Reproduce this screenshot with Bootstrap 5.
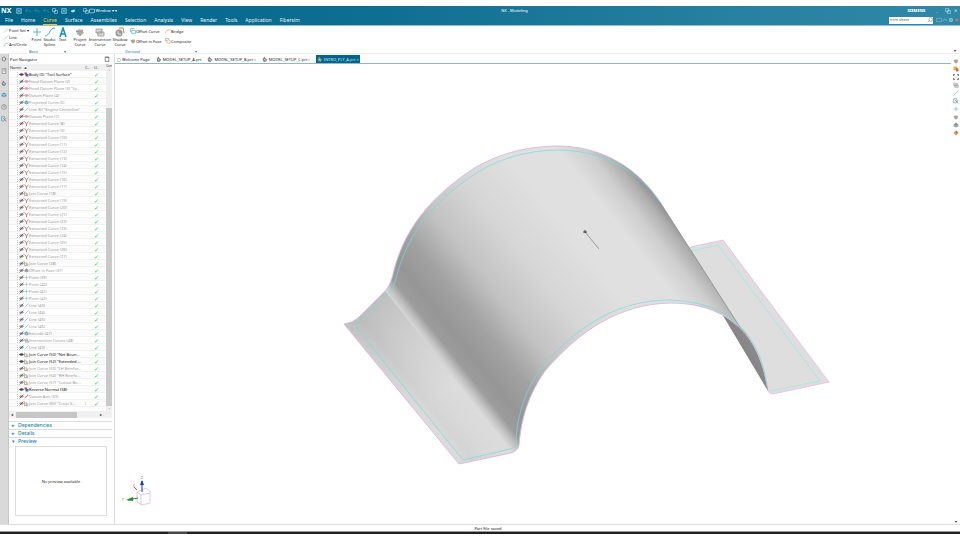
<!DOCTYPE html>
<html lang="en">
<head>
<meta charset="utf-8">
<meta name="viewport" content="width=device-width, initial-scale=1">
<title>NX - Modeling</title>
<link href="https://cdn.jsdelivr.net/npm/bootstrap@5.3.0/dist/css/bootstrap.min.css" rel="stylesheet">
<style>
body{font-family:"Noto Sans","Open Sans",sans-serif;font-size:4px;line-height:5px;color:#222;background:#fff;padding:6px 0}
button,a.plain{font:inherit;color:inherit;background:none;border:0;padding:0;text-decoration:none;white-space:nowrap}
svg{display:block;flex:none}
.i6{width:6px;height:6px}
.i10{width:10px;height:10px}
.topbar{background:linear-gradient(90deg,#006489,#0f6f93 40%,#26809f 75%,#2f88a6);color:#fff;border-bottom:1px solid #8fc0d4}
.quick{height:9px;padding:0 3px 0 1px;gap:3px}
.brand-nx{font-size:7px;font-weight:700;line-height:9px;margin-right:2px}
.doc-title{left:0;right:0;padding-left:69px;text-align:center;pointer-events:none}
.menus{height:10px;padding-left:5px;gap:8px;font-size:5px;line-height:10px;color:#e8f4f8}
.menus .active{color:#ffd23c;border-bottom:1px solid #f2c230}
.siemens{font-weight:800;font-size:4px}
.find{width:44px;height:7px;background:#fff;margin-right:3px}
.find input{border:0;padding:0 1px;font-size:4px;line-height:6px;min-width:0;flex:1;color:#555;outline:0}
.ribbon{height:28px;border-bottom:1px solid #eee;padding-left:3px}
.group-a{width:63px}
.group-b{width:127px}
.group-a{margin-right:4px}
.tools-row{height:23px}
.group-name{color:#1680a3;height:5px}
.small-col{width:27px;flex:none;gap:2px;padding-top:2px}
.small-col svg,.small-col button{height:5px}
.tall{display:flex;flex:none;flex-direction:column;align-items:center;text-align:center;white-space:normal!important;padding-top:1px!important}
.w13{width:13px}.w20{width:20px}
.duo{display:grid;grid-template-columns:35px 30px;align-content:start;row-gap:4px;padding-top:2px}
.rail{width:9px;background:#d9d9d9;border-right:1px solid #c6c6c6;gap:6px;padding-top:2px}
.nav-pane{width:106px;border-right:1px solid #ddd;padding-right:2px}
.pane-title{height:10px;padding:0 2px 0 1px}
.tree-area{height:347px}
.tree{table-layout:fixed;border-collapse:collapse;width:97px;font-size:4px}
.tree tr{height:7px}
.tree td,.tree th{padding:0;height:7px;line-height:5px;overflow:hidden;white-space:nowrap;vertical-align:middle;box-shadow:inset 0 -1px #f2f2f2}
.tree th{font-weight:400;background:#efefef;color:#444}
.tree tbody td{color:#999}
.tree tbody tr.live td{color:#111}
.tree tbody tr:nth-child(even){background:#fbfbfb}
.node{display:flex;align-items:center;padding-left:8px}
.node::before{content:"";width:2px;height:5px;border-left:1px dotted #ccc}
.tick{display:block;color:#28d040;font:700 6px/5px "DejaVu Sans",sans-serif}
.vbar{width:6px;background:#f0f0f0;font-size:3px}
.vthumb{background:#c9c9c9;margin-top:34px}
.hbar{height:7px;background:#f0f0f0;padding:0 2px;margin-bottom:3px}
.hthumb{width:61px;height:6px;background:#c6c6c6;margin-left:3px}
.fold{display:flex;align-items:center;gap:3px;width:100%;height:8px;font-size:5px!important;font-weight:500!important;color:#237f9f!important;padding-left:3px!important;border-top:1px solid #ddd!important}
.preview-box{margin:1px 5px 8px 6px;height:70px;border:1px solid #ddd}
.tabs{height:10px;border-bottom:1px solid #8cbacd;padding:1px 0 0 2px}
.tabs button{display:flex;align-items:center;gap:1px;height:8px;padding:0 6px 0 0}
.tabs .current{background:#00648b;color:#cfe6ef;padding:0 1px}
.side{width:9px;gap:2px;padding-top:4px}
.status{height:7px;border-top:1px solid #ddd;color:#111}
.taskbar{height:3px;background:#221f20;border-top:1px solid #999}
.taskbar span{width:19px;background:#4a4748;margin-left:168px}
.canvas-wrap{min-width:0}
</style>
<script src="https://cdn.jsdelivr.net/npm/bootstrap@5.3.0/dist/js/bootstrap.bundle.min.js"></script>
</head>
<body class="d-flex flex-column min-vh-100">
<svg width="0" height="0" class="position-absolute" aria-hidden="true">
<defs>
<symbol id="line" viewBox="0 0 10 10"><path d="M1 9 9 1" stroke="#48aacb" fill="none"/></symbol>
<symbol id="point" viewBox="0 0 10 10"><path d="M5 1v8M1 5h8" stroke="#55b4dc" fill="none"/></symbol>
<symbol id="arc" viewBox="0 0 10 10"><path d="M1 9Q2 2 9 2" stroke="#48aacb" fill="none"/></symbol>
<symbol id="spline" viewBox="0 0 10 10"><path d="M0 9C5 9 4 1 10 1" stroke="#48aacb" fill="none"/></symbol>
<symbol id="txt" viewBox="0 0 10 10"><path d="M2 10 5 1l3 9M3 7h4" stroke="#0f91bb" stroke-width="1.500" fill="none"/></symbol>
<symbol id="solid" viewBox="0 0 10 10"><path d="M1 4 4 2l4 1v4L5 9 2 7z" fill="#b4b8ba"/><path d="M1 4 5 5l3-2M5 5v4" stroke="#777" stroke-width=".6" fill="none"/><path d="M3 7Q6 3 9 6" stroke="#df975f" fill="none"/></symbol>
<symbol id="layers" viewBox="0 0 10 10"><path d="M1 2h6v4H1zM3 5h6v4H3z" fill="#d4dadd" stroke="#879096" stroke-width=".7"/><path d="M2 8 8 2" stroke="#e2a06f" fill="none"/></symbol>
<symbol id="shadow" viewBox="0 0 10 10"><circle cx="4" cy="6" r="3.500" fill="#969696"/><path d="M4 1h4l1 5" stroke="#d77b44" fill="none"/><path d="M3 4v3h3" stroke="#eee" fill="none"/></symbol>
<symbol id="offset" viewBox="0 0 10 10"><path d="M1 7V1h6M3 9V4h6v5z" stroke="#38a0b9" fill="none"/></symbol>
<symbol id="bridge" viewBox="0 0 10 10"><path d="M0 9Q3 3 6 3h4" stroke="#e29358" fill="none"/></symbol>
<symbol id="comp" viewBox="0 0 10 10"><path d="M1 1h5v4H1z" stroke="#46a9c9" fill="none"/><circle cx="6" cy="6" r="3" stroke="#e5a76d" fill="#fff4dc"/></symbol>
<symbol id="eye" viewBox="0 0 10 10"><path d="M0 5Q5 0 10 5 5 10 0 5" fill="#444"/></symbol>
<symbol id="hidden" viewBox="0 0 10 10"><path d="M0 5Q5 0 10 5 5 10 0 5" fill="#999"/><path d="M1 9 9 1" stroke="#555" stroke-width="1.500"/></symbol>
<symbol id="body" viewBox="0 0 10 10"><path d="M1 1h5v4H1z" fill="#d44545"/><path d="M3 4h6v5H3z" fill="#3771bc"/></symbol>
<symbol id="plane" viewBox="0 0 10 10"><path d="M0 5h10M5 2v6M2 3l6 4M8 3 2 7" stroke="#ee8ca3" stroke-width="1.500"/></symbol>
<symbol id="ext" viewBox="0 0 10 10"><path d="M1 1 5 6v4" stroke="#e96d5c" stroke-width="2" fill="none"/><path d="M9 1 5 6" stroke="#999" stroke-width="2"/></symbol>
<symbol id="join" viewBox="0 0 10 10"><path d="M1 1v8h6M4 2v4h5" stroke="#a69487" stroke-width="1.500" fill="none"/><path d="m5 7 3 2" stroke="#de955a" stroke-width="2"/></symbol>
<symbol id="axis" viewBox="0 0 10 10"><path d="m1 8 6-5" stroke="#d65b72" stroke-width="2"/><path d="m6 1 3 1-2 3" fill="#d65b72"/></symbol>
<symbol id="cube" viewBox="0 0 10 10"><path d="M1 3 5 1l4 2v4L5 9 1 7z" fill="#579eb5"/><path d="M1 3 5 5l4-2M5 5v4" stroke="#d8eef4" fill="none"/></symbol>
<symbol id="save" viewBox="0 0 10 10"><path d="M1 1h8v8H1zM3 1v3h4V1M3 9V6h4v3" stroke="#a6d6e8" fill="none"/></symbol>
<symbol id="undo" viewBox="0 0 10 10"><path d="M4 1 1 4l3 3M1 4h5q3 0 3 4" stroke="#3d91ad" fill="none"/></symbol>
<symbol id="win" viewBox="0 0 10 10"><path d="M1 2h8v6H1z" stroke="#e5f4f9" fill="none"/></symbol>
<symbol id="copy" viewBox="0 0 10 10"><path d="M1 1h5v5H1zM4 4h5v5H4z" stroke="#b9deeb" fill="none"/></symbol>
<symbol id="wpart" viewBox="0 0 10 10"><path d="M1 5 5 3h4L7 7H3z" fill="#b9deeb"/></symbol>
<symbol id="part" viewBox="0 0 10 10"><path d="M1 5 4 1l2 3 3 2-3 4-4-1z" fill="#888"/><path d="m3 5 3 2" stroke="#fff"/></symbol>
<symbol id="fit" viewBox="0 0 10 10"><path d="M1 3V1h2M7 1h2v2M9 7v2H7M3 9H1V7" stroke="#333" stroke-width="1.500" fill="none"/><path d="M4 4h2v2H4z" fill="#999"/></symbol>
<symbol id="gear" viewBox="0 0 10 10"><circle cx="5" cy="5" r="3" stroke="#777" stroke-width="2" stroke-dasharray="2 1" fill="none"/></symbol>
<symbol id="clock" viewBox="0 0 10 10"><circle cx="5" cy="5" r="4" stroke="#777" fill="none"/><path d="M5 2v3h2" stroke="#777" fill="none"/></symbol>
<symbol id="lens" viewBox="0 0 10 10"><circle cx="6" cy="4" r="3" stroke="#777" fill="none"/><path d="M4 6 1 9" stroke="#777"/></symbol>
<symbol id="page" viewBox="0 0 10 10"><path d="M2 1h6v8H2z" fill="#eee" stroke="#777"/><path d="M4 3h3M4 5h3" stroke="#777"/></symbol>
<symbol id="tools" viewBox="0 0 10 10"><path d="M1 1h5v3M1 1v7h3" stroke="#3c98b6" fill="none"/><path d="m3 3 6 6M9 3 4 9" stroke="#777" stroke-width="1.200"/></symbol>
<symbol id="hot" viewBox="0 0 10 10"><path d="M1 1h6v6H1z" fill="#f0a045"/><path d="M5 4h4v5H5z" fill="#b46b40"/></symbol>
<symbol id="gem" viewBox="0 0 10 10"><path d="M1 5 5 1l4 4-4 4z" fill="#e89156"/><path d="m5 1 4 4H5z" fill="#936d5c"/></symbol>
<symbol id="gray" viewBox="0 0 10 10"><path d="m1 4 4-3 4 3v3L5 9 1 7z" fill="#8c9290"/><path d="m2 5 3 2 4-3" stroke="#cfd5ce" fill="none"/></symbol>
</defs>
</svg>

<header class="topbar">
  <div class="quick d-flex align-items-center position-relative">
    <span class="brand-nx">NX</span>
    <svg class="i6"><use href="#save"/></svg>
    <svg class="i6"><use href="#undo"/></svg>
    <svg class="i6"><use href="#undo"/></svg>
    <svg class="i6"><use href="#undo"/></svg>
    <svg class="i6"><use href="#copy"/></svg>
    <svg class="i6"><use href="#save"/></svg>
    <svg class="i6"><use href="#wpart"/></svg>
    <button class="d-flex align-items-center ms-1"><svg class="i6"><use href="#copy"/></svg><svg class="i6"><use href="#win"/></svg>Window ▾ ▾</button>
    <span class="doc-title position-absolute">NX - Modeling</span>
    <span class="ms-auto siemens me-1">SIEMENS</span>
    <button aria-label="Minimize" class="px-1">_</button>
    <button aria-label="Restore"><svg class="i6"><use href="#copy"/></svg></button>
    <button aria-label="Close">✕</button>
  </div>
  <div class="d-flex align-items-center">
    <nav class="menus d-flex">
      <a class="plain" href="#">File</a><a class="plain" href="#">Home</a><a class="plain active" href="#">Curve</a><a class="plain" href="#">Surface</a><a class="plain" href="#">Assemblies</a><a class="plain" href="#">Selection</a><a class="plain" href="#">Analysis</a><a class="plain" href="#">View</a><a class="plain" href="#">Render</a><a class="plain" href="#">Tools</a><a class="plain" href="#">Application</a><a class="plain" href="#">Fibersim</a>
    </nav>
    <div class="find d-flex align-items-center ms-auto"><input type="text" value="trim sheet" aria-label="Find a command"><svg class="i6"><use href="#lens"/></svg></div>
    <button aria-label="Full screen"><svg class="i6"><use href="#win" opacity=".5"/></svg></button>
    <button aria-label="Collapse ribbon"><svg class="i6" viewBox="0 0 10 10"><path d="m1 7 4-4 4 4" stroke="#a9d3e0" fill="none"/></svg></button>
    <button aria-label="Help"><svg class="i6" viewBox="0 0 10 10"><circle cx="5" cy="5" r="3" fill="#69abc2" stroke="#a9d3e0"/></svg></button>
    <button aria-label="Record"><svg class="i6" viewBox="0 0 10 10"><circle cx="5" cy="5" r="3" fill="#ac7772"/></svg></button>
  </div>
</header>

<section class="ribbon d-flex">
  <div class="group-a">
    <div class="tools-row d-flex">
      <div class="small-col d-flex flex-column align-items-start">
        <button class="d-flex"><svg class="i6"><use href="#line"/></svg>Point Set ▾</button>
        <button class="d-flex"><svg class="i6"><use href="#line"/></svg>Line</button>
        <button class="d-flex"><svg class="i6"><use href="#arc"/></svg>Arc/Circle</button>
      </div>
      <button class="tall w13"><svg class="i10"><use href="#point"/></svg>Point</button>
      <button class="tall w13"><svg class="i10"><use href="#spline"/></svg>Studio Spline</button>
      <button class="tall w13"><svg class="i10"><use href="#txt"/></svg>Text</button>
    </div>
    <div class="group-name d-flex"><span class="mx-auto">Base</span><span>▾</span></div>
  </div>
  <div class="group-b">
    <div class="tools-row d-flex">
      <button class="tall w20"><svg class="i10"><use href="#solid"/></svg>Project<br>Curve</button>
      <button class="tall w20"><svg class="i10"><use href="#layers"/></svg>Intersection<br>Curve</button>
      <button class="tall w20"><svg class="i10"><use href="#shadow"/></svg>Shadow<br>Curve</button>
      <div class="duo">
        <button class="d-flex align-items-center"><svg class="i6"><use href="#offset"/></svg>Offset Curve</button>
        <button class="d-flex align-items-center"><svg class="i6"><use href="#bridge"/></svg>Bridge</button>
        <button class="d-flex align-items-center"><svg class="i6"><use href="#solid"/></svg>Offset in Face</button>
        <button class="d-flex align-items-center"><svg class="i6"><use href="#comp"/></svg>Composite</button>
      </div>
    </div>
    <div class="group-name d-flex"><span class="mx-auto">Derived</span><span>▾</span></div>
  </div>
  <button class="ms-auto align-self-end pe-1" aria-label="Ribbon options">▾</button>
</section>

<main class="d-flex flex-grow-1">
  <aside class="rail d-flex flex-column align-items-center">
    <svg class="i6"><use href="#gear"/></svg>
    <svg class="i6"><use href="#page"/></svg>
    <svg class="i6"><use href="#part"/></svg>
    <svg class="i6"><use href="#cube"/></svg>
    <svg class="i6"><use href="#clock"/></svg>
    <svg class="i6"><use href="#tools"/></svg>
  </aside>
  <section class="nav-pane d-flex flex-column flex-shrink-0">
    <div class="pane-title d-flex align-items-center justify-content-between"><span>Part Navigator</span><svg class="i6" viewBox="0 0 10 10"><path d="M2 2h6v7H2zM2 2h6" stroke="#444" fill="none"/></svg></div>
    <div class="tree-area d-flex">
      <table class="tree align-self-start">
        <colgroup><col style="width:76px"><col style="width:9px"><col style="width:12px"></colgroup>
        <thead><tr><th>&nbsp;Name &nbsp;▲</th><th>C..</th><th>U..</th></tr></thead>
        <tbody id="rows"></tbody>
      </table>
      <div class="vbar d-flex flex-column align-items-center"><span>Con</span><span>⌃</span><div class="vthumb w-100 flex-grow-1"></div><span>⌄</span></div>
    </div>
    <div class="hbar d-flex align-items-center"><span>◂</span><div class="hthumb"></div><span class="ms-auto me-2">▸</span></div>
    <button class="fold"><span>▸</span>Dependencies</button>
    <button class="fold"><span>▸</span>Details</button>
    <button class="fold"><span>▾</span>Preview</button>
    <div class="preview-box d-flex align-items-center justify-content-center">No preview available</div>
  </section>
  <section class="canvas-wrap flex-grow-1 d-flex">
      <div class="flex-grow-1 d-flex flex-column canvas-wrap">
        <div class="tabs d-flex">
          <button>▢ Welcome Page</button>
          <button><svg class="i6"><use href="#part"/></svg>MODEL_SETUP_A.prt</button>
          <button><svg class="i6"><use href="#part"/></svg>MODEL_SETUP_B.prt ▫</button>
          <button><svg class="i6"><use href="#part"/></svg>MODEL_SETUP_C.prt ▫</button>
          <button class="current"><svg class="i6"><use href="#part"/></svg>INTRO_PLY_A.prt ×</button>
        </div>
        <svg class="w-100" viewBox="115 64 836 460" role="img" aria-label="Tool surface model">
          <defs>
            <linearGradient id="shade" gradientUnits="userSpaceOnUse" x1="344" y1="324" x2="595" y2="124">
              <stop offset="0" stop-color="#dedede"/><stop offset=".05" stop-color="#d4d4d4"/><stop offset=".11" stop-color="#dadada"/><stop offset=".16" stop-color="#dcdcdc"/><stop offset=".18" stop-color="#c4c4c4"/><stop offset=".205" stop-color="#9c9c9c"/><stop offset=".25" stop-color="#969696"/><stop offset=".33" stop-color="#a2a2a2"/><stop offset=".43" stop-color="#c2c2c2"/><stop offset=".57" stop-color="#d6d6d6"/><stop offset=".73" stop-color="#e0e0e0"/><stop offset=".86" stop-color="#e0e0e0"/><stop offset=".93" stop-color="#cecece"/><stop offset=".98" stop-color="#aeaeae"/><stop offset="1" stop-color="#989898"/>
            </linearGradient>
            <linearGradient id="fade" gradientUnits="userSpaceOnUse" x1="375" y1="295" x2="470" y2="411"><stop offset="0" stop-color="#888" stop-opacity=".35"/><stop offset=".8" stop-color="#aaa" stop-opacity="0"/></linearGradient>
            <linearGradient id="under" x1="0" y1="1" x2="1" y2="0"><stop offset="0" stop-color="#737373"/><stop offset="1" stop-color="#989898"/></linearGradient>
          </defs>
          <path d="M691 247 723 240 829 382 773 394Q768 394 767 386C764 368 757 347 743 331L730 325 680 249z" fill="#dedede"/>
          <path d="M691 247 723 240 829 382 773 394Q768 394 767 386" fill="none" stroke="#e4c0e4" stroke-width=".9"/>
          <path d="M692 251 718 245 820 381 770 391" fill="none" stroke="#96e8e5" stroke-width=".7"/>
          <path d="M722 314 743 330C757 347 764 368 768 391z" fill="url(#under)"/>
          <path d="M344 324Q352 323 358 318L385 291Q391 285 394 270C407 221 439 191 476 167C503 152 530 146 560 146C603 147 638 168 660 202L743 331C728 315 705 303 670 303C620 304 580 330 545 371C528 395 521 420 519 445Q518 451 511 453L459 464z" fill="url(#shade)"/>
          <path d="M344 324Q352 323 358 318L385 291 494 428 459 464z" fill="url(#fade)"/>
          <path d="M660 202 741 329" fill="none" stroke="#8f8f8f" stroke-width=".7"/>
          <path d="M459 464 344 324Q352 323 358 318L385 291Q391 285 394 270C407 221 439 191 476 167C503 152 530 146 560 146C603 147 638 168 660 202M767 386C762 350 740 303 670 303C620 304 580 330 545 371C528 395 521 420 519 445Q518 451 511 453L459 464" fill="none" stroke="#dcb6de" stroke-width=".9"/>
          <path d="M510 449 463 460 355 326 390 292Q395 285 398 271C411 227 440 196 478 172C503 157 530 150 560 150C603 151 638 170 661 203M767 386C761 343 737 300 665 300C613 302 575 329 541 368C524 393 517 417 516 441Q516 448 510 449" fill="none" stroke="#70dfda" stroke-width=".7"/>
          <path d="m585 232 14 17" stroke="#888" stroke-width=".8"/><path d="M583 232h4M585 230v3" stroke="#222" stroke-width=".8"/>
          <g fill="none">
            <path d="m137 492 9-4 4 3v12l-8 2-5-3zM137 492l4 3 9-2M141 495v10" stroke="#cba9cb" stroke-width=".6"/>
            <path d="M142 492V481" stroke="#1337c8"/><path d="m140 485 2-5 2 5z" fill="#1337c8"/>
            <path d="m138 498-10 2" stroke="#218932"/><path d="m133 497-7 3 7 1z" fill="#218932"/><path d="m137 490-3-3" stroke="#e33b3b"/>
          </g>
          <g font-size="3"><text x="141" y="479" fill="#1337c8">Z</text><text x="122" y="501" fill="#218932">Y</text><text x="133" y="487" fill="#e33b3b">X</text></g>
        </svg>
      </div>
      <aside class="side d-flex flex-column align-items-center">
        <svg class="i6"><use href="#solid"/></svg><svg class="i6"><use href="#hot"/></svg><svg class="i6"><use href="#fit"/></svg><svg class="i6"><use href="#layers"/></svg><svg class="i6"><use href="#line"/></svg><svg class="i6"><use href="#tools"/></svg><svg class="i6"><use href="#point"/></svg><svg class="i6"><use href="#solid"/></svg><svg class="i6"><use href="#gray"/></svg><svg class="i6"><use href="#gem"/></svg>
        <span class="mt-auto">▾</span>
      </aside>
  </section>
</main>
<footer>
  <div class="status d-flex align-items-center justify-content-center"><span class="ps-3">Part File saved</span></div>
  <div class="taskbar d-flex"><span></span></div>
</footer>
<script>
const seq=(name,from,to,icon)=>Array.from({length:to-from+1},(_,i)=>[`${name} (${from+i})`,icon]);
const items=[
 ['Body (0) "Tool Surface"','body',1],['Fixed Datum Plane (2)','plane'],['Fixed Datum Plane (3) "Sy...','plane'],
 ['Datum Plane (4)','plane'],['Projected Curve (5)','cube'],['Line (6) "Engine Centerline"','line'],['Datum Plane (7)','plane'],
 ...seq('Extracted Curve',8,17,'ext'),['Join Curve (18)','join'],...seq('Extracted Curve',19,27,'ext'),
 ['Join Curve (28)','join'],['Offset in Face (37)','gray'],...seq('Point',39,42,'point'),...seq('Line',43,46,'line'),
 ['Extrude (47)','cube'],['Intersection Curves (48)','layers'],['Line (49)','line'],
 ['Join Curve (50) "Net Boun...','join',1],['Join Curve (52) "Extended ...','join',1],['Join Curve (53) "LH Reinfor...','join'],
 ['Join Curve (54) "RH Reinfo...','join'],['Join Curve (57) "Cutout Bo...','join'],['Reverse Normal (58)','body',1],
 ['Datum Axis (59)','axis'],['Join Curve (60) "Cross S...','join',0,'!']
];
document.getElementById('rows').innerHTML=items.map(([name,icon,live,note])=>
 `<tr class="${live?'live':''}"><td><div class="node"><svg width="5" height="5"><use href="#${live?'eye':'hidden'}"/></svg><svg width="5" height="5"><use href="#${icon}"/></svg>${name}</div></td><td>${note||''}</td><td><span class="tick">✓</span></td></tr>`).join('');
</script>
</body>
</html>
